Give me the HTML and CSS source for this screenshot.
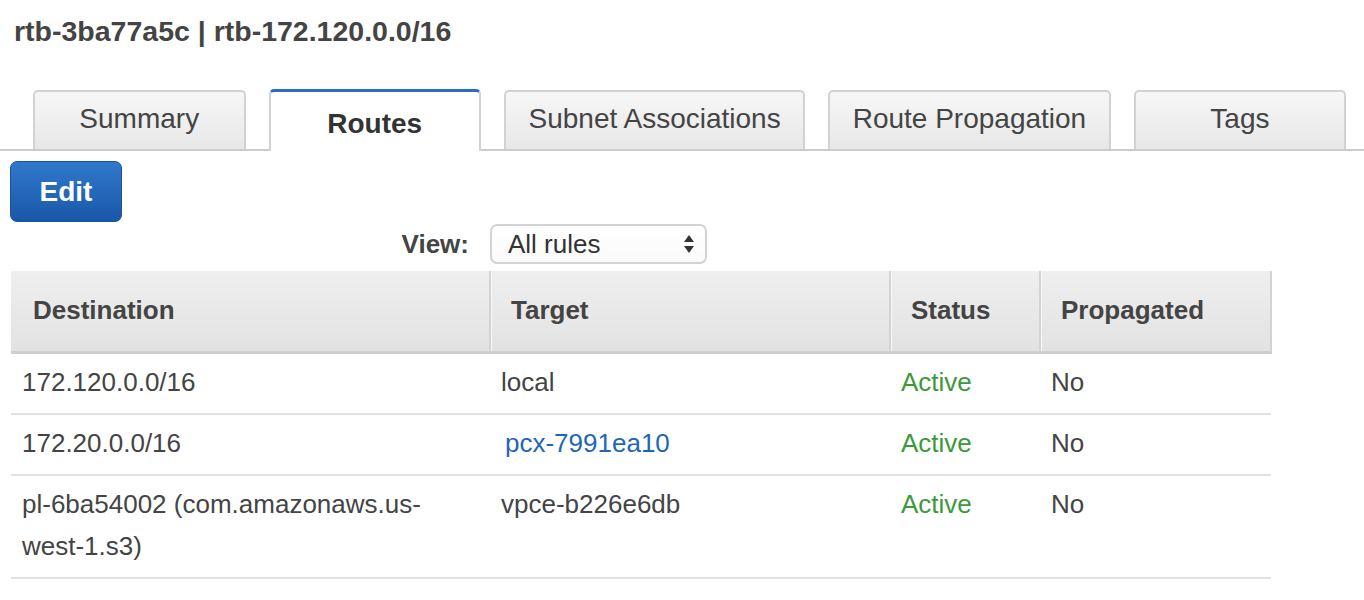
FILE: index.html
```html
<!DOCTYPE html>
<html>
<head>
<meta charset="utf-8">
<link rel="stylesheet" href="styles.css">
</head>
<body>
  <h1 class="title">rtb-3ba77a5c | rtb-172.120.0.0/16</h1>
  <div class="tabs">
    <div class="tab">Summary</div>
    <div class="tab tab-active">Routes</div>
    <div class="tab">Subnet Associations</div>
    <div class="tab">Route Propagation</div>
    <div class="tab">Tags</div>
  </div>
  <button class="btn-edit">Edit</button>
  <div class="view-row">
    <span class="view-label">View:</span>
    <div class="select">
      <span>All rules</span>
      <svg class="select-arrows" width="12" height="20" viewBox="0 0 12 20">
        <path d="M6 1 L11 8 L1 8 Z" fill="#333"/>
        <path d="M1 12 L11 12 L6 19 Z" fill="#333"/>
      </svg>
    </div>
  </div>
  <table class="routes">
    <colgroup>
      <col class="c-dest">
      <col class="c-target">
      <col class="c-status">
      <col class="c-prop">
    </colgroup>
    <thead>
      <tr>
        <th>Destination</th>
        <th>Target</th>
        <th>Status</th>
        <th>Propagated</th>
      </tr>
    </thead>
    <tbody>
      <tr>
        <td>172.120.0.0/16</td>
        <td>local</td>
        <td class="active">Active</td>
        <td>No</td>
      </tr>
      <tr>
        <td>172.20.0.0/16</td>
        <td><a class="link" href="#">pcx-7991ea10</a></td>
        <td class="active">Active</td>
        <td>No</td>
      </tr>
      <tr>
        <td>pl-6ba54002 (com.amazonaws.us-west-1.s3)</td>
        <td>vpce-b226e6db</td>
        <td class="active">Active</td>
        <td>No</td>
      </tr>
    </tbody>
  </table>
</body>
</html>
```
FILE: styles.css
```css
* { box-sizing: border-box; }

body {
  margin: 0;
  font-family: "Liberation Sans", Arial, Helvetica, sans-serif;
  color: #444;
  background: #fff;
}

.title {
  margin: 0;
  padding: 14px 0 0 14px;
  font-size: 28.5px;
  line-height: 34px;
  font-weight: bold;
  color: #444;
}

.tabs {
  display: flex;
  align-items: flex-end;
  gap: 23px;
  margin-top: 41px;
  padding-left: 33px;
  border-bottom: 2px solid #cbcbcb;
}

.tab {
  min-width: 212.5px;
  height: 59px;
  padding: 0 22.5px 3px;
  display: flex;
  align-items: center;
  justify-content: center;
  font-size: 28px;
  color: #444;
  background: linear-gradient(#f7f7f7, #e7e7e7);
  border: 2px solid #d2d2d2;
  border-bottom: none;
  border-radius: 5px 5px 0 0;
  white-space: nowrap;
}

.tab-active {
  height: 62px;
  margin-bottom: -2px;
  padding-top: 4px;
  padding-bottom: 0;
  background: #fff;
  border-top: 3px solid #2a6ebb;
  font-weight: bold;
  color: #333;
}

.btn-edit {
  display: block;
  margin: 10px 0 0 10px;
  width: 112px;
  height: 61px;
  border: 1px solid #1a529b;
  border-radius: 7px;
  background: linear-gradient(#3078cb, #1a58a8);
  color: #fff;
  font-family: "Liberation Sans", Arial, sans-serif;
  font-size: 28px;
  font-weight: bold;
  padding: 0;
}

.view-row {
  display: flex;
  align-items: center;
  gap: 21px;
  margin: 2px 0 0 11px;
}

.view-label {
  width: 458px;
  text-align: right;
  font-size: 26px;
  font-weight: bold;
  color: #444;
}

.select {
  width: 217px;
  height: 40px;
  display: flex;
  align-items: center;
  justify-content: space-between;
  padding: 0 10px 0 16px;
  border: 2px solid #d3d3d3;
  border-radius: 7px;
  background: linear-gradient(#fff, #fafafa);
  font-size: 26px;
  color: #333;
}

.select-arrows { display: block; }

.routes {
  margin: 7px 0 0 11px;
  width: 1260px;
  table-layout: fixed;
  border-collapse: collapse;
}

.c-dest { width: 479px; }
.c-target { width: 400px; }
.c-status { width: 150px; }
.c-prop { width: 231px; }

.routes th {
  height: 81px;
  padding: 0 0 0 20px;
  text-align: left;
  font-size: 26px;
  font-weight: bold;
  color: #444;
  background: linear-gradient(#efefef, #e2e2e2);
  border-left: 2px solid #d3d3d3;
  border-bottom: 3px solid #cfcfcf;
  box-shadow: inset 1px 0 0 #f8f8f8;
}

.routes th:first-child {
  border-left: none;
  padding-left: 22px;
  box-shadow: none;
}

.routes th:last-child {
  border-right: 2px solid #d3d3d3;
}

.routes td {
  padding: 7px 11px 10px;
  vertical-align: top;
  font-size: 26px;
  line-height: 42px;
  color: #444;
  border-bottom: 2px solid #e1e1e1;
}

.routes td.active { color: #3c9a3c; }

.link {
  color: #1f66b7;
  text-decoration: none;
  margin-left: 4px;
}
```
